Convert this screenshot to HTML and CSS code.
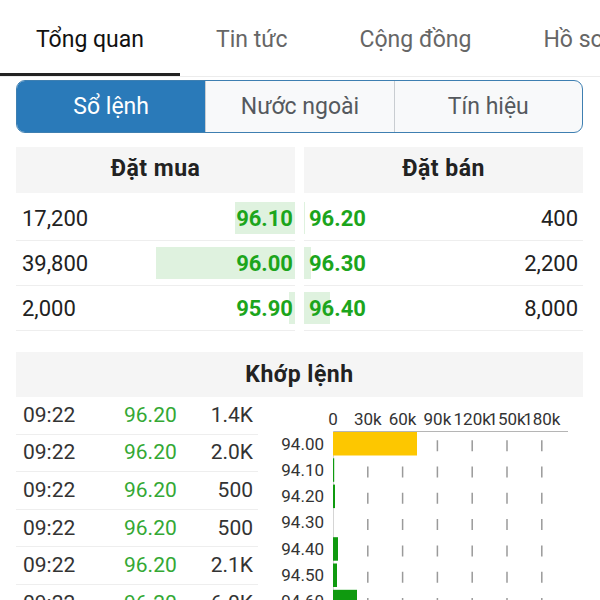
FILE: index.html
```html
<!DOCTYPE html>
<html lang="vi">
<head>
  <meta charset="UTF-8">
  <meta name="viewport" content="width=device-width, initial-scale=1.0">
  <title>Sổ lệnh</title>
  <link rel="stylesheet" href="styles.css">
</head>
<body>
  <nav class="tabs">
    <a class="tab active">Tổng quan</a>
    <a class="tab">Tin tức</a>
    <a class="tab">Cộng đồng</a>
    <a class="tab">Hồ sơ</a>
  </nav>

  <div class="segments">
    <div class="segment active">Sổ lệnh</div>
    <div class="segment">Nước ngoài</div>
    <div class="segment">Tín hiệu</div>
  </div>

  <div class="book">
    <div class="book-side buy">
      <div class="book-head">Đặt mua</div>
      <div class="book-row">
        <span class="depth" style="width:60px"></span>
        <span class="vol">17,200</span>
        <span class="price">96.10</span>
      </div>
      <div class="book-row">
        <span class="depth" style="width:139px"></span>
        <span class="vol">39,800</span>
        <span class="price">96.00</span>
      </div>
      <div class="book-row">
        <span class="depth" style="width:6px"></span>
        <span class="vol">2,000</span>
        <span class="price">95.90</span>
      </div>
    </div>
    <div class="book-side sell">
      <div class="book-head">Đặt bán</div>
      <div class="book-row">
        <span class="depth" style="width:1px"></span>
        <span class="price">96.20</span>
        <span class="vol">400</span>
      </div>
      <div class="book-row">
        <span class="depth" style="width:7px"></span>
        <span class="price">96.30</span>
        <span class="vol">2,200</span>
      </div>
      <div class="book-row">
        <span class="depth" style="width:26px"></span>
        <span class="price">96.40</span>
        <span class="vol">8,000</span>
      </div>
    </div>
  </div>

  <div class="section-head">Khớp lệnh</div>

  <div class="matches">
    <div class="trade-list">
      <div class="trade"><span>09:22</span><span class="t-price">96.20</span><span class="t-vol">1.4K</span></div>
      <div class="trade"><span>09:22</span><span class="t-price">96.20</span><span class="t-vol">2.0K</span></div>
      <div class="trade"><span>09:22</span><span class="t-price">96.20</span><span class="t-vol">500</span></div>
      <div class="trade"><span>09:22</span><span class="t-price">96.20</span><span class="t-vol">500</span></div>
      <div class="trade"><span>09:22</span><span class="t-price">96.20</span><span class="t-vol">2.1K</span></div>
      <div class="trade"><span>09:22</span><span class="t-price">96.20</span><span class="t-vol">6.0K</span></div>
    </div>

    <svg class="chart" width="325" height="230" viewBox="0 0 325 230">
      <g class="x-labels">
        <text x="75" y="28">0</text>
        <text x="109.8" y="28">30k</text>
        <text x="144.6" y="28">60k</text>
        <text x="179.4" y="28">90k</text>
        <text x="214.2" y="28">120k</text>
        <text x="249" y="28">150k</text>
        <text x="283.8" y="28">180k</text>
      </g>
      <g class="grid">
        <line x1="109.8" y1="43.2" x2="109.8" y2="230"/>
        <line x1="144.6" y1="43.2" x2="144.6" y2="230"/>
        <line x1="179.4" y1="43.2" x2="179.4" y2="230"/>
        <line x1="214.2" y1="43.2" x2="214.2" y2="230"/>
        <line x1="249" y1="43.2" x2="249" y2="230"/>
        <line x1="283.8" y1="43.2" x2="283.8" y2="230"/>
      </g>
      <line class="axis" x1="75" y1="34.5" x2="310" y2="34.5"/>
      <line class="axis-left" x1="75.5" y1="34.5" x2="75.5" y2="230"/>
      <g class="y-labels">
        <text x="66" y="52.5">94.00</text>
        <text x="66" y="78.8">94.10</text>
        <text x="66" y="105.1">94.20</text>
        <text x="66" y="131.4">94.30</text>
        <text x="66" y="157.7">94.40</text>
        <text x="66" y="184">94.50</text>
        <text x="66" y="210.3">94.60</text>
      </g>
      <rect class="bar-top" x="75" y="35" width="84" height="23.5"/>
      <rect class="bar" x="75" y="61.3" width="1.2" height="23.5"/>
      <rect class="bar" x="75" y="87.6" width="2" height="23.5"/>
      <rect class="bar" x="75" y="140.2" width="5" height="23.5"/>
      <rect class="bar" x="75" y="166.5" width="4" height="23.5"/>
      <rect class="bar" x="75" y="192.8" width="24" height="23.5"/>
    </svg>
  </div>
</body>
</html>
```

FILE: styles.css
```css
html, body {
  margin: 0;
  height: 600px;
  overflow: hidden;
  background: #fff;
}

body {
  font-family: Roboto, "Liberation Sans", sans-serif;
  color: #222;
}

/* top tabs */
.tabs {
  display: flex;
  white-space: nowrap;
  overflow: hidden;
  border-bottom: 1px solid #ececec;
}

.tab {
  padding: 27px 36px 20px;
  font-size: 23px;
  line-height: 26px;
  color: #666;
  border-bottom: 3px solid transparent;
}

.tab.active {
  color: #111;
  border-bottom-color: #222;
}

/* segmented control */
.segments {
  display: grid;
  grid-template-columns: 1fr 1fr 1fr;
  margin: 3px 17px 0 16px;
  border: 1.5px solid #3e7fb1;
  border-radius: 9px;
  overflow: hidden;
  background: #f8f9fa;
}

.segment {
  text-align: center;
  font-size: 23px;
  line-height: 51px;
  color: #55595e;
  border-left: 1px solid #c9cdd1;
}

.segment:first-child {
  border-left: none;
}

.segment.active {
  background: #2a7ab9;
  color: #fff;
}

/* order book */
.book {
  display: grid;
  grid-template-columns: 1fr 1fr;
  column-gap: 9px;
  margin: 14px 17px 0 16px;
}

.book-head {
  background: #f5f5f5;
  text-align: center;
  font-weight: bold;
  font-size: 23px;
  letter-spacing: 0.5px;
  line-height: 44px;
  padding-bottom: 2px;
  margin-bottom: 3px;
}

.book-row {
  position: relative;
  display: flex;
  justify-content: space-between;
  align-items: center;
  height: 44px;
  border-bottom: 1px solid #eeeeee;
  font-size: 22px;
}

.book-row span {
  position: relative;
}

.depth {
  position: absolute !important;
  top: 6px;
  bottom: 6px;
  background: #dff2df;
}

.buy .depth {
  right: 0;
}

.sell .depth {
  left: 0;
}

.price {
  color: #1ca51c;
  font-weight: bold;
}

.buy .vol {
  padding-left: 6px;
}

.buy .price {
  padding-right: 2px;
}

.sell .price {
  padding-left: 5px;
}

.sell .vol {
  padding-right: 5px;
}

/* matched orders */
.section-head {
  margin: 21px 17px 0 16px;
  background: #f5f5f5;
  text-align: center;
  font-weight: bold;
  font-size: 23px;
  letter-spacing: 0.5px;
  line-height: 45px;
}

.matches {
  display: flex;
  margin: 0 17px 0 16px;
}

.trade-list {
  width: 242px;
}

.trade {
  display: grid;
  grid-template-columns: 101px 1fr auto;
  align-items: center;
  height: 35.6px;
  padding: 0 5px 1px 7px;
  border-bottom: 1px solid #eeeeee;
  font-size: 21px;
  color: #333;
}

.t-price {
  color: #34a834;
}

.chart {
  display: block;
  flex: none;
}

.chart text {
  font-family: Roboto, "Liberation Sans", sans-serif;
  font-size: 17px;
  fill: #333;
}

.x-labels text {
  text-anchor: middle;
}

.y-labels text {
  text-anchor: end;
}

.grid line {
  stroke: #9a9a9a;
  stroke-width: 1.5;
  stroke-dasharray: 11 15.3;
}

.axis {
  stroke: #b5b5b5;
  stroke-width: 1;
}

.axis-left {
  stroke: #d5d5d5;
  stroke-width: 1;
}

.bar-top {
  fill: #fdc700;
}

.bar {
  fill: #0f9a0f;
}
```
